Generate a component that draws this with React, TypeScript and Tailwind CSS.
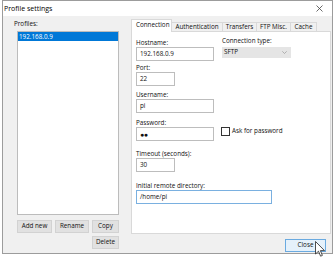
import React from "react";

function Label({ children, className = "" }: { children: React.ReactNode; className?: string }) {
  return <div className={"h-[9px] leading-[9px] text-[6.3px] text-[#111] whitespace-nowrap " + className}>{children}</div>;
}

function TextBox({ value, w, focused = false, dots = false }: { value: string; w: string; focused?: boolean; dots?: boolean }) {
  return (
    <div
      className={
        "h-[14px] bg-white border flex items-center pl-[3px] text-[6.3px] leading-none text-[#111] " +
        w +
        (focused ? " border-[#7ab0e0]" : " border-[#bdbdbd]")
      }
    >
      {dots ? <span className="text-[7px] font-bold tracking-[-0.5px]">●●</span> : value}
    </div>
  );
}

function Btn({ children, w }: { children: React.ReactNode; w: string }) {
  return (
    <div className={"h-[13px] bg-[#e1e1e1] border border-[#d2d2d2] flex items-center justify-center text-[6.3px] leading-none text-[#111] " + w}>
      {children}
    </div>
  );
}

export default function App() {
  return (
    <div className="w-[336px] h-[257px] bg-white relative overflow-hidden font-['Open_Sans',sans-serif]">
      <div className="ml-[2px] w-[331px] h-[254px] border border-[#9c9c9c] flex flex-col">
        {/* title bar */}
        <div className="h-[15px] bg-white flex items-center justify-between shrink-0">
          <span className="pl-[1px] text-[7px] leading-none text-black">Profile settings</span>
          <svg width="7" height="7" viewBox="0 0 7 7" className="mr-[9px]">
            <path d="M0.5 0.5 L6.5 6.5 M6.5 0.5 L0.5 6.5" stroke="#444" strokeWidth="0.8" fill="none" />
          </svg>
        </div>
        {/* body */}
        <div className="flex-1 bg-[#f0f0f0] flex">
          {/* left column */}
          <div className="pl-[14px] pt-[3px] w-[116px] flex flex-col">
            <div className="-ml-[3px] h-[10px] leading-[10px] text-[6.3px] text-[#111]">Profiles:</div>
            <div className="mt-[2px] h-[184px] bg-white border border-[#bcbcbc]">
              <div className="h-[9px] bg-[#0078d7] text-white text-[6.3px] leading-[9px] pl-[1px]">192.168.0.9</div>
            </div>
            <div className="mt-[5px] flex gap-[3px]">
              <Btn w="w-[36px]">Add new</Btn>
              <Btn w="w-[35px]">Rename</Btn>
              <div className="ml-auto">
                <Btn w="w-[27px]">Copy</Btn>
              </div>
            </div>
            <div className="mt-[3px] flex justify-end">
              <Btn w="w-[27px]">Delete</Btn>
            </div>
          </div>
          {/* right column */}
          <div className="ml-[12px] pt-[3px] w-[200px] flex flex-col">
            {/* tabs */}
            <div className="h-[12px] flex items-end relative z-10 text-[6.3px] leading-none text-[#111]">
              <div className="h-[13px] -mb-[1px] w-[41px] bg-white border border-b-0 border-[#d9d9d9] flex items-center pl-[4px] pb-[1px]">
                Connection
              </div>
              <div className="h-[9px] w-[51px] bg-[#f0f0f0] border border-b-0 border-l-0 border-[#d9d9d9] flex items-center justify-center">
                Authentication
              </div>
              <div className="h-[9px] w-[34px] bg-[#f0f0f0] border border-b-0 border-l-0 border-[#d9d9d9] flex items-center justify-center">
                Transfers
              </div>
              <div className="h-[9px] w-[34px] bg-[#f0f0f0] border border-b-0 border-l-0 border-[#d9d9d9] flex items-center justify-center">
                FTP Misc.
              </div>
              <div className="h-[9px] w-[26px] bg-[#f0f0f0] border border-b-0 border-l-0 border-[#d9d9d9] flex items-center justify-center">
                Cache
              </div>
            </div>
            {/* panel */}
            <div className="h-[203px] w-[200px] bg-white border border-[#d9d9d9] pl-[4px]">
              <div className="mt-[4px] flex items-start">
                <div className="flex flex-col">
                  <Label className="mt-[2px]">Hostname:</Label>
                  <TextBox value="192.168.0.9" w="w-[78px]" />
                </div>
                <div className="ml-[8px] flex flex-col">
                  <Label>Connection type:</Label>
                  <div className="mt-[2px] h-[11px] w-[69px] bg-[#e5e5e5] flex items-center justify-between pl-[2px] pr-[4px] text-[6.3px] leading-none text-[#111]">
                    <span>SFTP</span>
                    <svg width="5" height="3" viewBox="0 0 5 3">
                      <path d="M0.3 0.3 L2.5 2.5 L4.7 0.3" stroke="#999" strokeWidth="0.7" fill="none" />
                    </svg>
                  </div>
                </div>
              </div>
              <Label className="mt-[2px]">Port:</Label>
              <TextBox value="22" w="w-[39px]" />
              <Label className="mt-[4px]">Username:</Label>
              <TextBox value="pi" w="w-[78px]" />
              <Label className="mt-[5px]">Password:</Label>
              <div className="flex items-start">
                <TextBox value="" dots w="w-[78px]" />
                <div className="ml-[7px] flex items-center">
                  <div className="w-[9px] h-[9px] bg-white border border-[#333333]" />
                  <span className="ml-[2px] text-[6.3px] leading-none text-[#111]">Ask for password</span>
                </div>
              </div>
              <Label className="mt-[8px]">Timeout (seconds):</Label>
              <TextBox value="30" w="w-[39px]" />
              <Label className="mt-[9px]">Initial remote directory:</Label>
              <TextBox value="/home/pi" w="w-[136px]" focused />
            </div>
            <div className="mt-[5px] flex justify-end pr-[5px]">
              <div className="h-[13px] w-[41px] bg-[#e5f1fb] border border-[#6aaae0] flex items-center justify-center text-[6.3px] leading-none text-[#111]">
                Close
              </div>
            </div>
          </div>
        </div>
      </div>
      {/* mouse cursor overlay */}
      <svg className="absolute left-[315px] top-[241px]" width="11" height="17" viewBox="0 0 11 17">
        <path d="M0.5 0.5 L0.5 13 L3.5 10.2 L5.6 15.2 L7.4 14.4 L5.4 9.6 L9.5 9.6 Z" fill="white" stroke="#222" strokeWidth="0.8" strokeLinejoin="round" />
      </svg>
    </div>
  );
}
